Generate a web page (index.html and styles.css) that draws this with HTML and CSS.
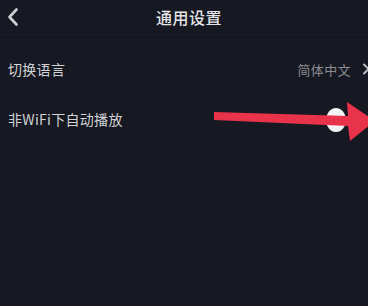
FILE: index.html
```html
<!DOCTYPE html>
<html lang="zh">
<head>
<meta charset="utf-8">
<link rel="stylesheet" href="styles.css">
</head>
<body>
<div class="screen">
  <header class="topbar">
    <svg class="back" width="12" height="20" viewBox="0 0 12 20"><path d="M9.5 2.5 L2.5 10 L9.5 17.5" fill="none" stroke="#cfd0d4" stroke-width="2.6" stroke-linecap="round" stroke-linejoin="round"/></svg>
    <h1 class="title">通用设置</h1>
  </header>
  <div class="row row-lang">
    <span class="label">切换语言</span>
    <span class="value">简体中文<svg class="chev" width="8" height="12" viewBox="0 0 8 12"><path d="M2 1.5 L6.5 6 L2 10.5" fill="none" stroke="#b8b9bd" stroke-width="2" stroke-linecap="round" stroke-linejoin="round"/></svg></span>
  </div>
  <div class="row row-wifi">
    <span class="label">非WiFi下自动播放</span>
    <span class="knob"></span>
  </div>
  <svg class="arrow" width="160" height="44" viewBox="0 0 160 44"><path d="M4 12 L138 16 L137 2 L165 21 L140 41 L138 26 L4 20 Z" fill="#e8334a"/></svg>
</div>
</body>
</html>
```
FILE: styles.css
```css
html, body { margin: 0; padding: 0; }
body {
  background: #161822;
  font-family: "Noto Sans CJK SC", "Noto Sans", sans-serif;
  width: 368px;
  height: 306px;
  overflow: hidden;
}
.screen { position: relative; width: 368px; height: 306px; }
.topbar {
  height: 34px;
  display: flex;
  align-items: center;
  justify-content: center;
  position: relative;
  border-bottom: 1px solid #1c1e28;
}
.back { position: absolute; left: 7px; top: 7px; }
.title {
  margin: 0 0 0 10px;
  font-size: 16px;
  font-weight: 500;
  color: #e4e4e6;
  letter-spacing: 0.5px;
}
.row {
  display: flex;
  align-items: center;
  justify-content: space-between;
  padding: 0 0 0 8px;
}
.row-lang { height: 36px; margin-top: 16px; }
.row-wifi { height: 36px; margin-top: 14px; }
.label { font-size: 14px; color: #d2d3d6; letter-spacing: 0.3px; }
.value {
  font-size: 13px;
  color: #8b8c92;
  display: flex;
  align-items: center;
  gap: 11px;
  margin-right: -2px;
  letter-spacing: 0.4px;
}
.knob {
  width: 20px; height: 24px;
  border-radius: 50%;
  background: #f4f4f6;
  margin-right: 22px;
  margin-top: 2px;
}
.arrow { position: absolute; left: 210px; top: 100px; }
```
